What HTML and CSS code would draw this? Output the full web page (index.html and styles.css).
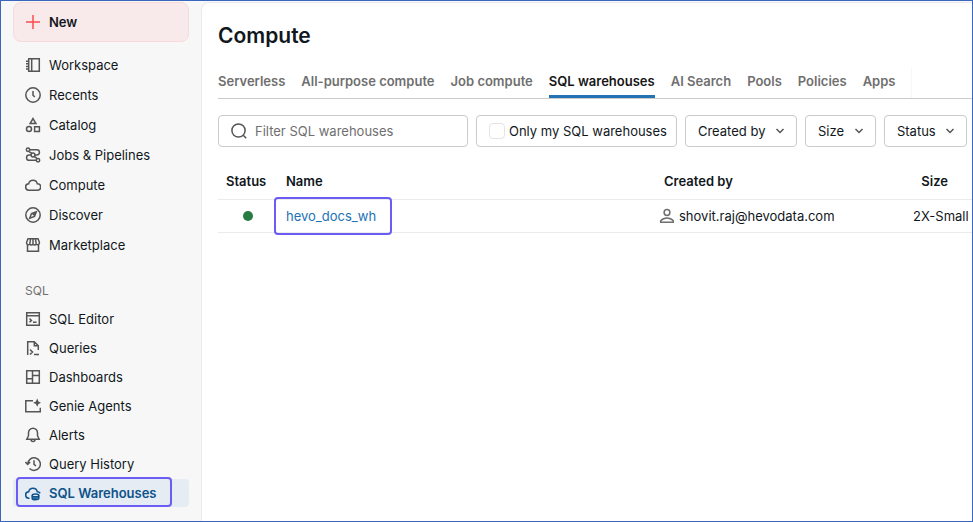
FILE: index.html
```
<!DOCTYPE html>
<html lang="en">
<head>
    <meta charset="UTF-8">
    <meta name="viewport" content="width=device-width, initial-scale=1.0">
    <title>Compute - SQL warehouses</title>
    <link rel="stylesheet" href="styles.css">
</head>
<body>
    <div class="app">
        <aside class="sidebar">
            <button type="button" class="new-button">
                <svg class="icon" viewBox="0 0 16 16"><path d="M8 1v14M1 8h14"/></svg>
                New
            </button>

            <nav class="nav nav-main">
                <a href="#" class="nav-item">
                    <svg class="icon" viewBox="0 0 16 16"><path d="M3.7 1.7h10.600v12.600H3.700zM6.700 1.700v12.600M1 4.200h2.700M1 6.800h2.700M1 9.400h2.700M1 12h2.700"/></svg>
                    Workspace
                </a>
                <a href="#" class="nav-item">
                    <svg class="icon" viewBox="0 0 16 16"><circle cx="8" cy="8" r="7.2"/><path d="M8 4v4.200l1.800 1.800"/></svg>
                    Recents
                </a>
                <a href="#" class="nav-item">
                    <svg class="icon" viewBox="0 0 16 16"><path d="M8 1.600l2.900 5H5.100zM9.600 9.700h4.800v4.800H9.600z"/><circle cx="4" cy="12.1" r="2.5"/></svg>
                    Catalog
                </a>
                <a href="#" class="nav-item">
                    <svg class="icon" viewBox="0 0 16 16"><circle cx="3" cy="2.7" r="1.7"/><circle cx="8" cy="8" r="1.9"/><circle cx="13" cy="13.3" r="1.7"/><path d="M4.700 2.700h7.100a2.650 2.650 0 0 1 0 5.300H9.900M6.100 8H4.200a2.650 2.650 0 0 0 0 5.300h7.100M4 5c1 0 2 .3 2.700 1.500M9.400 9.500c.8 1 1.600 1.400 2.600 1.500"/></svg>
                    Jobs &amp; Pipelines
                </a>
                <a href="#" class="nav-item">
                    <svg class="icon" viewBox="0 0 16 16"><path d="M4 13.200a3.200 3.200 0 0 1-.3-6.400 4.400 4.400 0 0 1 8.600 0h.2a3.200 3.200 0 0 1 0 6.400z"/></svg>
                    Compute
                </a>
                <a href="#" class="nav-item">
                    <svg class="icon" viewBox="0 0 16 16"><circle cx="8" cy="8" r="7.2"/><path d="M11.300 4.700L9.500 9.500 4.700 11.300 6.500 6.500z"/><path d="M11 5L6.700 6.700l2.600 2.600z" class="solid"/></svg>
                    Discover
                </a>
                <a href="#" class="nav-item">
                    <svg class="icon" viewBox="0 0 16 16"><path d="M3 1.700h10l1.400 3.600v.7a1.900 1.900 0 0 1-3.200 1.300 2.100 2.100 0 0 1-3.200 0 2.100 2.100 0 0 1-3.200 0A1.900 1.900 0 0 1 1.600 6v-.7zM2.500 8v6.300h11V8M5.600 1.700L4.800 7M8 1.700V7M10.400 1.700l.8 5.300"/></svg>
                    Marketplace
                </a>
            </nav>

            <h2 class="nav-heading">SQL</h2>
            <nav class="nav nav-sql">
                <a href="#" class="nav-item">
                    <svg class="icon" viewBox="0 0 16 16"><path d="M1.700 1.700h12.600v12.600H1.700zM1.700 4.700h12.600M4.500 7.500l2 1.900-2 1.900M8 11.300h3.500"/></svg>
                    SQL Editor
                </a>
                <a href="#" class="nav-item">
                    <svg class="icon" viewBox="0 0 16 16"><path d="M2.700 15V1.700h6.600l4 4V10M9.300 1.700v4h4M5 9.500l2.500 2.500L5 14.500M9 14.500h5"/></svg>
                    Queries
                </a>
                <a href="#" class="nav-item">
                    <svg class="icon" viewBox="0 0 16 16"><path d="M1.700 1.700h12.600v12.600H1.700zM7.500 1.700v12.600M1.700 9.700h5.800M7.500 6.500h6.800"/></svg>
                    Dashboards
                </a>
                <a href="#" class="nav-item">
                    <svg class="icon" viewBox="0 0 16 16"><path d="M8 2.700H.8v11h14.500V9.700"/><path class="solid" d="M12.200.6l1.300 2.800 2.500 1.300-2.500 1.300-1.300 2.800-1.300-2.800-2.800-1.300 2.800-1.300z"/></svg>
                    Genie Agents
                </a>
                <a href="#" class="nav-item">
                    <svg class="icon" viewBox="0 0 16 16"><path d="M8 1.200a4.500 4.500 0 0 0-4.500 4.500v3L1.800 12.300h12.400l-1.700-3.600v-3A4.500 4.500 0 0 0 8 1.200zM6 12.500a2 2 0 0 0 4 0"/></svg>
                    Alerts
                </a>
                <a href="#" class="nav-item">
                    <svg class="icon" viewBox="0 0 16 16"><path d="M2.700 8A6.300 6.300 0 1 1 4.500 12.500M.4 6l2.300 2.500L5.200 6M9 4.300v4l2 1.700"/></svg>
                    Query History
                </a>
                <a href="#" class="nav-item active">
                    <svg class="icon" viewBox="0 0 16 16"><path d="M4.500 13.200H4a3.200 3.200 0 0 1-.3-6.400 4.400 4.400 0 0 1 8.600 0c1.200 0 2.200.4 2.900 1.400"/><ellipse cx="10.500" cy="10.400" rx="3.300" ry="1.300"/><path d="M7.200 10.400v3c0 1.800 6.600 1.800 6.600 0v-3M7.200 12c0 1.600 6.600 1.600 6.600 0"/></svg>
                    SQL Warehouses
                </a>
            </nav>
        </aside>

        <main class="content">
            <h1>Compute</h1>

            <nav class="tabs">
                <a href="#" class="tab">Serverless</a>
                <a href="#" class="tab">All-purpose compute</a>
                <a href="#" class="tab">Job compute</a>
                <a href="#" class="tab selected">SQL warehouses</a>
                <a href="#" class="tab">AI Search</a>
                <a href="#" class="tab">Pools</a>
                <a href="#" class="tab">Policies</a>
                <a href="#" class="tab">Apps</a>
            </nav>

            <form class="filters">
                <label class="control search">
                    <svg class="icon" viewBox="0 0 16 16"><circle cx="7.500" cy="7.500" r="6.600"/><path d="M12.200 12.200l3 3"/></svg>
                    <input type="text" placeholder="Filter SQL warehouses" aria-label="Filter SQL warehouses">
                </label>
                <label class="control only-mine">
                    <input type="checkbox">
                    Only my SQL warehouses
                </label>
                <div class="dropdown">
                    <select class="control" aria-label="Created by"><option>Created by</option></select>
                    <svg class="chevron" viewBox="0 0 10 10"><path d="M1.500 3L5 6.500 8.500 3"/></svg>
                </div>
                <div class="dropdown">
                    <select class="control" aria-label="Size"><option>Size</option></select>
                    <svg class="chevron" viewBox="0 0 10 10"><path d="M1.500 3L5 6.500 8.500 3"/></svg>
                </div>
                <div class="dropdown">
                    <select class="control" aria-label="Status"><option>Status</option></select>
                    <svg class="chevron" viewBox="0 0 10 10"><path d="M1.500 3L5 6.500 8.500 3"/></svg>
                </div>
            </form>

            <table class="warehouses">
                <thead>
                    <tr>
                        <th class="col-status">Status</th>
                        <th class="col-name">Name</th>
                        <th class="col-owner">Created by</th>
                        <th class="col-size">Size</th>
                    </tr>
                </thead>
                <tbody>
                    <tr>
                        <td class="col-status"><span class="status-dot"></span></td>
                        <td class="col-name"><a href="#" class="warehouse-link">hevo_docs_wh</a></td>
                        <td class="col-owner">
                            <span class="owner">
                                <svg class="icon" viewBox="0 0 16 16"><circle cx="8" cy="4.500" r="2.900"/><path d="M1.700 14.200v-1.400c1.500-1.800 3.700-2.900 6.300-2.900s4.800 1.100 6.300 2.900v1.400z"/></svg>
                                shovit.raj@hevodata.com
                            </span>
                        </td>
                        <td class="col-size">2X-Small</td>
                    </tr>
                </tbody>
            </table>
        </main>
    </div>
</body>
</html>
```
FILE: styles.css
```
* {
    box-sizing: border-box;
}

body {
    margin: 0;
    font-family: Inter, "Liberation Sans", sans-serif;
    font-size: 13px;
    line-height: 20px;
    color: #11171c;
}

a {
    color: inherit;
    text-decoration: none;
}

.app {
    display: flex;
    min-height: 100vh;
    padding-top: 1px;
    border: 1px solid #3a66bd;
    background-color: #f7f7f7;
    overflow: hidden;
}

.icon {
    flex: none;
    width: 16px;
    height: 16px;
    fill: none;
    stroke: #555;
    stroke-width: 1.5;
}

.icon .solid {
    fill: #555;
    stroke: none;
}

/* Sidebar */
.sidebar {
    flex: none;
    width: 200px;
    padding: 0 12px;
}

.new-button {
    display: flex;
    align-items: center;
    gap: 8px;
    width: 100%;
    height: 40px;
    padding: 0 11px;
    border: 1px solid #f7d9dc;
    border-radius: 8px;
    background-color: #f8e9ea;
    color: #11171c;
    font: inherit;
    font-weight: 600;
    cursor: pointer;
}

.new-button .icon {
    stroke: #ff4b50;
}

.nav {
    display: flex;
    flex-direction: column;
}

.nav-main {
    gap: 2px;
    margin-top: 9px;
}

.nav-sql {
    gap: 1px;
}

.nav-item {
    display: flex;
    align-items: center;
    gap: 8px;
    height: 28px;
    padding: 0 12px;
    border-radius: 4px;
    white-space: nowrap;
}

.nav-heading {
    margin: 22px 12px 4px;
    font-size: 12px;
    font-weight: 400;
    line-height: 20px;
    color: #6f6f6f;
}

.nav-item.active {
    position: relative;
    background-color: #e5ecf3;
    color: #0e538b;
    font-weight: 600;
}

.nav-item.active .icon {
    stroke: #0e538b;
}

.nav-item.active::after {
    content: "";
    position: absolute;
    top: -2px;
    right: 17px;
    bottom: 0;
    left: 3px;
    border: 2px solid #6b5cf6;
    border-radius: 4px;
}

/* Main panel */
.content {
    flex: 1;
    min-width: 0;
    padding: 17px 0 0 16px;
    border: 1px solid #ebebeb;
    border-width: 1px 0 0 1px;
    border-radius: 8px 0 0 0;
    background-color: white;
}

h1 {
    margin: 0;
    font-size: 21px;
    font-weight: 600;
    line-height: 32px;
}

.tabs {
    display: flex;
    gap: 16px;
    margin-top: 16px;
    border-bottom: 1px solid #cbcbcb;
    font-weight: 600;
    color: #6f6f6f;
    white-space: nowrap;
}

.tabs::after {
    content: "";
    border-left: 1px solid #f7f7f7;
}

.tab {
    height: 30px;
    padding-top: 3px;
}

.tab.selected {
    color: #161616;
    border-bottom: 3px solid #2272b4;
}

.filters {
    display: flex;
    gap: 8px;
    margin-top: 16px;
}

.control {
    height: 32px;
    border: 1px solid #cbcbcb;
    border-radius: 4px;
    background-color: white;
    color: #11171c;
    font: inherit;
    white-space: nowrap;
}

.search {
    display: flex;
    align-items: center;
    gap: 8px;
    width: 250px;
    padding: 0 12px;
}

.search input {
    flex: 1;
    min-width: 0;
    padding: 0;
    border: none;
    outline: none;
    background: none;
    font: inherit;
}

.search input::placeholder {
    color: #6f6f6f;
    opacity: 1;
}

.only-mine {
    display: flex;
    align-items: center;
    gap: 4px;
    padding: 0 9px 0 12px;
}

.only-mine input {
    appearance: none;
    width: 16px;
    height: 16px;
    margin: 0;
    border: 1px solid #e4e4e4;
    border-radius: 4px;
}

.dropdown {
    position: relative;
}

.dropdown select {
    appearance: none;
    padding: 0 30px 0 12px;
    cursor: pointer;
}

.chevron {
    position: absolute;
    top: 11px;
    right: 12px;
    width: 10px;
    height: 10px;
    fill: none;
    stroke: #555;
    stroke-width: 1.5;
    pointer-events: none;
}

/* Warehouse table */
.warehouses {
    width: 100%;
    margin-top: 16px;
    border-collapse: collapse;
    table-layout: fixed;
}

.warehouses th,
.warehouses td {
    padding: 6px 8px;
    border-bottom: 1px solid #ebebeb;
    text-align: left;
    white-space: nowrap;
}

.warehouses th {
    padding: 8px;
    font-weight: 600;
}

.warehouses .col-status {
    width: 60px;
}

.warehouses td.col-status {
    text-align: center;
}

.status-dot {
    display: inline-block;
    width: 10px;
    height: 10px;
    border-radius: 50%;
    background-color: #277c43;
}

.warehouses .col-owner {
    width: 249px;
}

.warehouses td.col-owner {
    padding-left: 3px;
}

.owner {
    display: flex;
    align-items: center;
    gap: 4px;
}

.owner .icon {
    stroke: #6f6f6f;
}

.warehouses .col-size {
    width: 67px;
    padding-right: 4px;
    text-align: right;
}

.warehouses th.col-size {
    padding-right: 24px;
}

.warehouse-link {
    position: relative;
    color: #2272b4;
}

.warehouse-link::after {
    content: "";
    position: absolute;
    top: -11px;
    right: -16px;
    bottom: -11px;
    left: -12px;
    border: 2px solid #6b5cf6;
    border-radius: 4px;
}
```
